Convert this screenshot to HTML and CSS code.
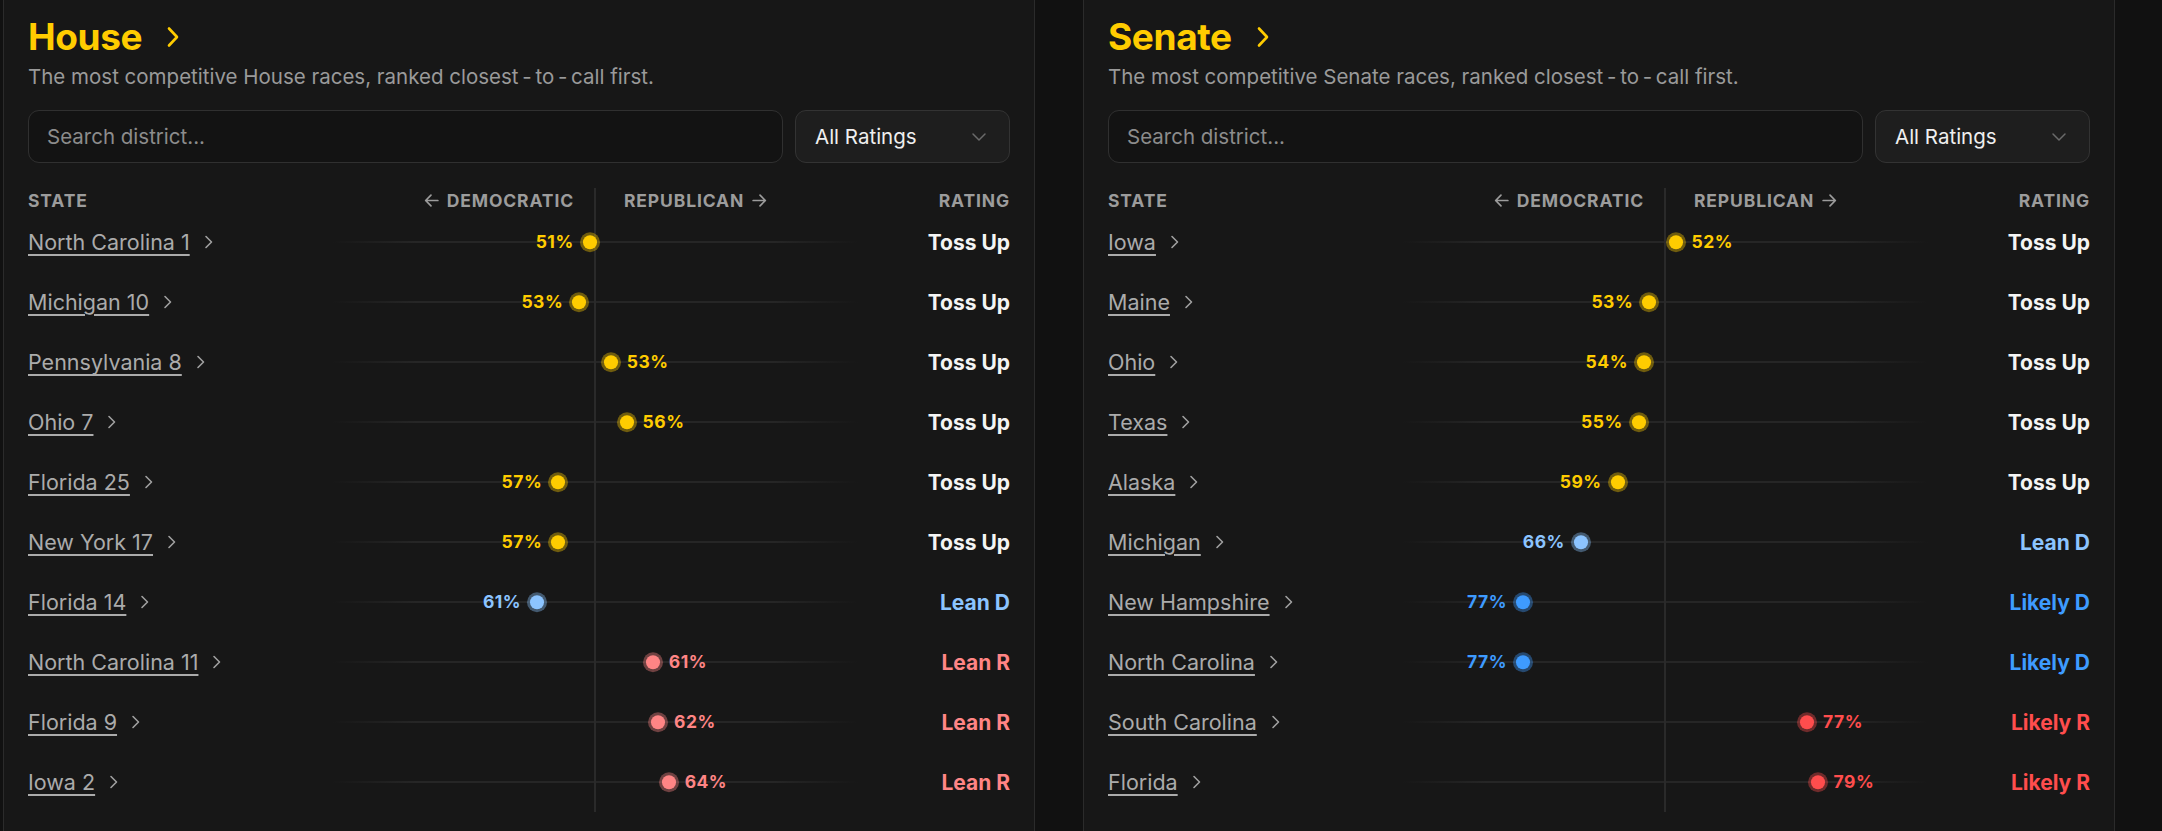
FILE: index.html
```html
<!DOCTYPE html>
<html lang="en">
<head>
<meta charset="utf-8">
<title>Competitive Races</title>
<link rel="stylesheet" href="styles.css">
</head>
<body>
<main class="boards">

  <section class="panel panel--house">
    <h2 class="panel-title">
      <a href="#">House</a>
      <svg class="title-chevron" viewBox="0 0 14 22" aria-hidden="true"><path d="M3 2.5 L11 11 L3 19.5"/></svg>
    </h2>
    <p class="panel-sub">The most competitive House races, ranked closest&#8201;-&#8201;to&#8201;-&#8201;call first.</p>

    <div class="filters">
      <input class="search" type="text" placeholder="Search district...">
      <button class="select" type="button">All Ratings
        <svg viewBox="0 0 16 10" aria-hidden="true"><path d="M2 2 L8 8 L14 2"/></svg>
      </button>
    </div>

    <div class="table">
      <div class="row row--head">
        <span class="head-state">State</span>
        <span class="chart chart--head">
          <span class="side side--d"><svg viewBox="0 0 16 16" aria-hidden="true"><path d="M14 8 H2.5 M7.5 3 L2.5 8 L7.5 13"/></svg>Democratic</span>
          <span class="side side--r">Republican<svg viewBox="0 0 16 16" aria-hidden="true"><path d="M2 8 H13.5 M8.5 3 L13.5 8 L8.5 13"/></svg></span>
        </span>
        <span class="head-rating">Rating</span>
      </div>

      <div class="row">
        <a class="state" href="#"><span>North Carolina 1</span><svg viewBox="0 0 10 16"><path d="M2 2.5 L7.5 8 L2 13.5"/></svg></a>
        <div class="chart"><span class="marker marker--d toss" style="right:51%"><i class="dot"></i>51%</span></div>
        <span class="rating toss">Toss Up</span>
      </div>
      <div class="row">
        <a class="state" href="#"><span>Michigan 10</span><svg viewBox="0 0 10 16"><path d="M2 2.5 L7.5 8 L2 13.5"/></svg></a>
        <div class="chart"><span class="marker marker--d toss" style="right:53%"><i class="dot"></i>53%</span></div>
        <span class="rating toss">Toss Up</span>
      </div>
      <div class="row">
        <a class="state" href="#"><span>Pennsylvania 8</span><svg viewBox="0 0 10 16"><path d="M2 2.5 L7.5 8 L2 13.5"/></svg></a>
        <div class="chart"><span class="marker marker--r toss" style="left:53%"><i class="dot"></i>53%</span></div>
        <span class="rating toss">Toss Up</span>
      </div>
      <div class="row">
        <a class="state" href="#"><span>Ohio 7</span><svg viewBox="0 0 10 16"><path d="M2 2.5 L7.5 8 L2 13.5"/></svg></a>
        <div class="chart"><span class="marker marker--r toss" style="left:56%"><i class="dot"></i>56%</span></div>
        <span class="rating toss">Toss Up</span>
      </div>
      <div class="row">
        <a class="state" href="#"><span>Florida 25</span><svg viewBox="0 0 10 16"><path d="M2 2.5 L7.5 8 L2 13.5"/></svg></a>
        <div class="chart"><span class="marker marker--d toss" style="right:57%"><i class="dot"></i>57%</span></div>
        <span class="rating toss">Toss Up</span>
      </div>
      <div class="row">
        <a class="state" href="#"><span>New York 17</span><svg viewBox="0 0 10 16"><path d="M2 2.5 L7.5 8 L2 13.5"/></svg></a>
        <div class="chart"><span class="marker marker--d toss" style="right:57%"><i class="dot"></i>57%</span></div>
        <span class="rating toss">Toss Up</span>
      </div>
      <div class="row">
        <a class="state" href="#"><span>Florida 14</span><svg viewBox="0 0 10 16"><path d="M2 2.5 L7.5 8 L2 13.5"/></svg></a>
        <div class="chart"><span class="marker marker--d lean-d" style="right:61%"><i class="dot"></i>61%</span></div>
        <span class="rating lean-d">Lean D</span>
      </div>
      <div class="row">
        <a class="state" href="#"><span>North Carolina 11</span><svg viewBox="0 0 10 16"><path d="M2 2.5 L7.5 8 L2 13.5"/></svg></a>
        <div class="chart"><span class="marker marker--r lean-r" style="left:61%"><i class="dot"></i>61%</span></div>
        <span class="rating lean-r">Lean R</span>
      </div>
      <div class="row">
        <a class="state" href="#"><span>Florida 9</span><svg viewBox="0 0 10 16"><path d="M2 2.5 L7.5 8 L2 13.5"/></svg></a>
        <div class="chart"><span class="marker marker--r lean-r" style="left:62%"><i class="dot"></i>62%</span></div>
        <span class="rating lean-r">Lean R</span>
      </div>
      <div class="row">
        <a class="state" href="#"><span>Iowa 2</span><svg viewBox="0 0 10 16"><path d="M2 2.5 L7.5 8 L2 13.5"/></svg></a>
        <div class="chart"><span class="marker marker--r lean-r" style="left:64%"><i class="dot"></i>64%</span></div>
        <span class="rating lean-r">Lean R</span>
      </div>
    </div>
  </section>

  <section class="panel panel--senate">
    <h2 class="panel-title">
      <a href="#">Senate</a>
      <svg class="title-chevron" viewBox="0 0 14 22" aria-hidden="true"><path d="M3 2.5 L11 11 L3 19.5"/></svg>
    </h2>
    <p class="panel-sub">The most competitive Senate races, ranked closest&#8201;-&#8201;to&#8201;-&#8201;call first.</p>

    <div class="filters">
      <input class="search" type="text" placeholder="Search district...">
      <button class="select" type="button">All Ratings
        <svg viewBox="0 0 16 10" aria-hidden="true"><path d="M2 2 L8 8 L14 2"/></svg>
      </button>
    </div>

    <div class="table">
      <div class="row row--head">
        <span class="head-state">State</span>
        <span class="chart chart--head">
          <span class="side side--d"><svg viewBox="0 0 16 16" aria-hidden="true"><path d="M14 8 H2.5 M7.5 3 L2.5 8 L7.5 13"/></svg>Democratic</span>
          <span class="side side--r">Republican<svg viewBox="0 0 16 16" aria-hidden="true"><path d="M2 8 H13.5 M8.5 3 L13.5 8 L8.5 13"/></svg></span>
        </span>
        <span class="head-rating">Rating</span>
      </div>

      <div class="row">
        <a class="state" href="#"><span>Iowa</span><svg viewBox="0 0 10 16"><path d="M2 2.5 L7.5 8 L2 13.5"/></svg></a>
        <div class="chart"><span class="marker marker--r toss" style="left:52%"><i class="dot"></i>52%</span></div>
        <span class="rating toss">Toss Up</span>
      </div>
      <div class="row">
        <a class="state" href="#"><span>Maine</span><svg viewBox="0 0 10 16"><path d="M2 2.5 L7.5 8 L2 13.5"/></svg></a>
        <div class="chart"><span class="marker marker--d toss" style="right:53%"><i class="dot"></i>53%</span></div>
        <span class="rating toss">Toss Up</span>
      </div>
      <div class="row">
        <a class="state" href="#"><span>Ohio</span><svg viewBox="0 0 10 16"><path d="M2 2.5 L7.5 8 L2 13.5"/></svg></a>
        <div class="chart"><span class="marker marker--d toss" style="right:54%"><i class="dot"></i>54%</span></div>
        <span class="rating toss">Toss Up</span>
      </div>
      <div class="row">
        <a class="state" href="#"><span>Texas</span><svg viewBox="0 0 10 16"><path d="M2 2.5 L7.5 8 L2 13.5"/></svg></a>
        <div class="chart"><span class="marker marker--d toss" style="right:55%"><i class="dot"></i>55%</span></div>
        <span class="rating toss">Toss Up</span>
      </div>
      <div class="row">
        <a class="state" href="#"><span>Alaska</span><svg viewBox="0 0 10 16"><path d="M2 2.5 L7.5 8 L2 13.5"/></svg></a>
        <div class="chart"><span class="marker marker--d toss" style="right:59%"><i class="dot"></i>59%</span></div>
        <span class="rating toss">Toss Up</span>
      </div>
      <div class="row">
        <a class="state" href="#"><span>Michigan</span><svg viewBox="0 0 10 16"><path d="M2 2.5 L7.5 8 L2 13.5"/></svg></a>
        <div class="chart"><span class="marker marker--d lean-d" style="right:66%"><i class="dot"></i>66%</span></div>
        <span class="rating lean-d">Lean D</span>
      </div>
      <div class="row">
        <a class="state" href="#"><span>New Hampshire</span><svg viewBox="0 0 10 16"><path d="M2 2.5 L7.5 8 L2 13.5"/></svg></a>
        <div class="chart"><span class="marker marker--d likely-d" style="right:77%"><i class="dot"></i>77%</span></div>
        <span class="rating likely-d">Likely D</span>
      </div>
      <div class="row">
        <a class="state" href="#"><span>North Carolina</span><svg viewBox="0 0 10 16"><path d="M2 2.5 L7.5 8 L2 13.5"/></svg></a>
        <div class="chart"><span class="marker marker--d likely-d" style="right:77%"><i class="dot"></i>77%</span></div>
        <span class="rating likely-d">Likely D</span>
      </div>
      <div class="row">
        <a class="state" href="#"><span>South Carolina</span><svg viewBox="0 0 10 16"><path d="M2 2.5 L7.5 8 L2 13.5"/></svg></a>
        <div class="chart"><span class="marker marker--r likely-r" style="left:77%"><i class="dot"></i>77%</span></div>
        <span class="rating likely-r">Likely R</span>
      </div>
      <div class="row">
        <a class="state" href="#"><span>Florida</span><svg viewBox="0 0 10 16"><path d="M2 2.5 L7.5 8 L2 13.5"/></svg></a>
        <div class="chart"><span class="marker marker--r likely-r" style="left:79%"><i class="dot"></i>79%</span></div>
        <span class="rating likely-r">Likely R</span>
      </div>
    </div>
  </section>

</main>
</body>
</html>
```

FILE: styles.css
```css
* {
  box-sizing: border-box;
}

html,
body {
  margin: 0;
  background: #111111;
}

body {
  font-family: "Inter", "Noto Sans", sans-serif;
  color: #e8e8e8;
  height: 831px;
  overflow: hidden;
}

/* two side-by-side race boards */
.boards {
  display: grid;
  grid-template-columns: 1032px 1032px;
  column-gap: 48px;
  margin: -1px 0 0 3px;
}

.panel {
  background: #171717;
  border: 1px solid #2b2b2b;
  padding: 15px 24px 40px;
}

/* heading */
.panel-title {
  display: flex;
  align-items: center;
  gap: 24px;
  margin: 0;
  font-size: 37px;
  line-height: 44px;
  font-weight: 700;
  letter-spacing: -0.01em;
}

.panel-title a {
  color: #ffcc00;
  text-decoration: none;
}

.title-chevron {
  width: 14px;
  height: 22px;
  fill: none;
  stroke: #ffcc00;
  stroke-width: 2.6;
  stroke-linecap: round;
  stroke-linejoin: round;
}

.panel-sub {
  margin: 4px 0 0;
  font-size: 20.5px;
  line-height: 28px;
  color: #9a9a9a;
}

/* search + rating filter */
.filters {
  display: flex;
  gap: 12px;
  margin-top: 19px;
  height: 53px;
}

.search {
  flex: 1;
  min-width: 0;
  height: 100%;
  padding: 0 18px;
  background: #131313;
  border: 1px solid #303030;
  border-radius: 11px;
  font: inherit;
  font-size: 20.5px;
  color: #e8e8e8;
  outline: none;
}

.search::placeholder {
  color: #8c8c8c;
}

.select {
  display: flex;
  align-items: center;
  justify-content: space-between;
  width: 215px;
  height: 100%;
  padding: 0 22px 0 19px;
  background: #1e1e1e;
  border: 1px solid #333333;
  border-radius: 11px;
  font: inherit;
  font-size: 20.5px;
  color: #efefef;
}

.select svg {
  width: 16px;
  height: 10px;
  fill: none;
  stroke: #6a6a6a;
  stroke-width: 1.5;
  stroke-linecap: round;
  stroke-linejoin: round;
}

/* race table */
.table {
  margin-top: 25px;
}

.row {
  display: grid;
  grid-template-columns: 1fr 526px var(--rating-col);
  align-items: center;
  height: 60px;
}

.panel--house {
  --rating-col: 152px;
}

.panel--senate {
  --rating-col: 162px;
}

.row--head {
  height: 24px;
  font-size: 17.5px;
  font-weight: 700;
  letter-spacing: 0.05em;
  text-transform: uppercase;
  color: #9c9c9c;
}

.head-rating {
  text-align: right;
}

.chart {
  position: relative;
  height: 100%;
  background:
    linear-gradient(#2a2a2a, #2a2a2a) center / 2px 100% no-repeat,
    linear-gradient(90deg, transparent, #262626 16%, #262626 84%, transparent) center / 100% 2px no-repeat;
}

.chart--head {
  display: grid;
  grid-template-columns: 1fr 1fr;
  align-items: center;
  background: linear-gradient(#2a2a2a, #2a2a2a) center / 2px 100% no-repeat;
}

.side {
  display: flex;
  align-items: center;
  gap: 7px;
}

.side svg {
  width: 17px;
  height: 17px;
  fill: none;
  stroke: #9c9c9c;
  stroke-width: 1.6;
  stroke-linecap: round;
  stroke-linejoin: round;
}

.side--d {
  justify-content: flex-end;
  padding-right: 21px;
}

.side--r {
  padding-left: 29px;
}

.state {
  display: flex;
  align-items: center;
  gap: 14px;
  justify-self: start;
  font-size: 21.5px;
  color: #ababab;
  text-decoration: none;
}

.state span {
  text-decoration: underline;
  text-decoration-thickness: 1.5px;
  text-underline-offset: 4px;
}

.state svg {
  width: 10px;
  height: 16px;
  fill: none;
  stroke: #a0a0a0;
  stroke-width: 1.6;
  stroke-linecap: round;
  stroke-linejoin: round;
}

.rating {
  text-align: right;
  font-size: 21px;
  font-weight: 700;
  color: var(--c);
}

/* rating palette */
.toss {
  --c: #ffcc00;
}

.rating.toss {
  color: #f4f4f4;
}

.lean-d {
  --c: #8cc4ff;
}

.likely-d {
  --c: #3e9bff;
}

.lean-r {
  --c: #ff8585;
}

.likely-r {
  --c: #ff4d4d;
}

/* probability marker: dot plus share, placed along the chart */
.marker {
  position: absolute;
  top: 50%;
  display: flex;
  align-items: center;
  gap: 9px;
  font-size: 17.5px;
  font-weight: 700;
  letter-spacing: 0.03em;
  line-height: 1;
  color: var(--c);
  white-space: nowrap;
}

.marker--r {
  transform: translate(-7px, -50%);
}

.marker--d {
  flex-direction: row-reverse;
  transform: translate(7px, -50%);
}

.dot {
  flex: none;
  width: 14px;
  height: 14px;
  border-radius: 50%;
  background: var(--c);
  box-shadow: 0 0 0 3px color-mix(in srgb, var(--c) 38%, transparent);
}
```
